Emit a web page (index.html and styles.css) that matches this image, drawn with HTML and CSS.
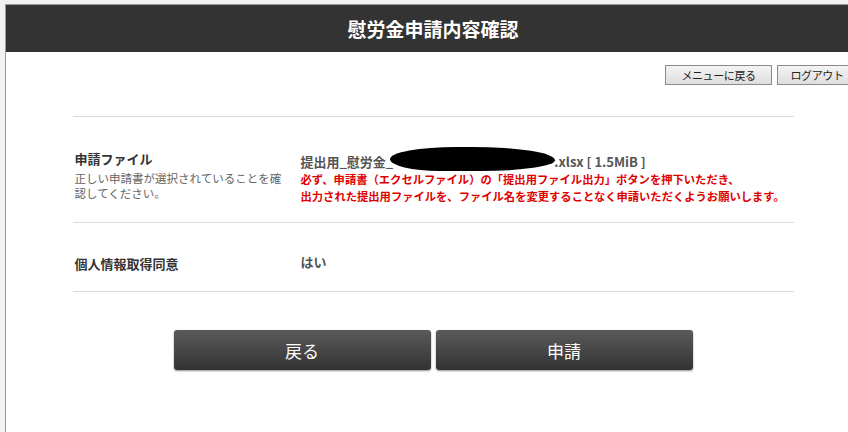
FILE: index.html
```html
<!DOCTYPE html>
<html lang="ja">
<head>
  <meta charset="UTF-8">
  <meta name="viewport" content="width=device-width, initial-scale=1.0">
  <title>慰労金申請内容確認</title>
  <link rel="stylesheet" href="styles.css">
</head>
<body>
  <div class="page">
    <div class="header">
      <h1>慰労金申請内容確認</h1>
    </div>

    <div class="topnav">
      <button class="nav-btn">メニューに戻る</button>
      <button class="nav-btn logout">ログアウト</button>
    </div>

    <table class="confirm">
      <tr class="row-file">
        <th>
          <div class="label">申請ファイル</div>
          <div class="desc">正しい申請書が選択されていることを確認してください。</div>
        </th>
        <td>
          <div class="filename">提出用_慰労金_<span class="redact"></span>.xlsx [ 1.5MiB ]</div>
          <div class="notice">必ず、申請書（エクセルファイル）の「提出用ファイル出力」ボタンを押下いただき、</div>
          <div class="notice">出力された提出用ファイルを、ファイル名を変更することなく申請いただくようお願いします。</div>
        </td>
      </tr>
      <tr class="row-agree">
        <th><div class="label">個人情報取得同意</div></th>
        <td><div class="filename">はい</div></td>
      </tr>
    </table>

    <div class="actions">
      <button class="big-btn">戻る</button>
      <button class="big-btn">申請</button>
    </div>
  </div>
</body>
</html>
```

FILE: styles.css
```css
html, body {
  margin: 0;
  height: 100%;
}
body {
  background: #f2f2f2;
  overflow: hidden;
  font-family: "Noto Sans CJK JP", "Noto Sans", sans-serif;
  color: #333;
}
.page {
  width: 854px;
  min-height: 428px;
  margin: 4px 0 0 5px;
  background: #fff;
  border-top: 1px solid #9a9a9a;
  border-left: 1px solid #9a9a9a;
}
.header {
  height: 47px;
  background: #333;
  display: flex;
  align-items: center;
  justify-content: center;
}
.header h1 {
  margin: 0;
  color: #fff;
  font-size: 19px;
  font-weight: bold;
}
.topnav {
  display: flex;
  gap: 5px;
  padding: 13px 0 0 659px;
}
.nav-btn {
  flex: none;
  width: 107px;
  height: 20px;
  padding: 0;
  font-family: "Noto Sans CJK JP", sans-serif;
  font-size: 11px;
  letter-spacing: -0.4px;
  line-height: 18px;
  color: #222;
  background: linear-gradient(#f4f4f4, #dedede);
  border: 1px solid #8a8a8a;
  border-radius: 0;
}
.nav-btn.logout {
  width: 80px;
}
.confirm {
  width: 721px;
  margin: 31px auto 0;
  border-collapse: collapse;
  border-top: 1px solid #dcdcdc;
}
.confirm tr {
  border-bottom: 1px solid #dcdcdc;
}
.confirm th {
  width: 226px;
  text-align: left;
  vertical-align: top;
  padding: 0 0 0 2px;
  font-weight: normal;
}
.confirm td {
  vertical-align: top;
  padding: 0;
}
.row-file th { padding-top: 32px; padding-bottom: 21px; }
.row-file td { padding-top: 30px; }
.row-agree th { padding-top: 31px; padding-bottom: 18px; }
.row-agree td { padding-top: 30px; }
.label {
  font-size: 13px;
  font-weight: bold;
  color: #333;
  line-height: 19px;
}
.desc {
  width: 215px;
  margin-top: 3px;
  font-size: 11.5px;
  line-height: 15px;
  color: #666;
}
.filename {
  font-size: 13px;
  font-weight: bold;
  color: #555;
  line-height: 18px;
  white-space: nowrap;
}
.redact {
  display: inline-block;
  width: 165px;
  height: 24px;
  margin: 0 -1px -4px -3px;
  background: #000;
  border-radius: 40% 50% 45% 30% / 50% 55% 45% 50%;
  vertical-align: baseline;
}
.notice {
  font-size: 11.3px;
  font-weight: bold;
  color: #e00000;
  line-height: 17px;
  white-space: nowrap;
}
.actions {
  display: flex;
  justify-content: center;
  gap: 5px;
  margin-top: 38px;
}
.big-btn {
  width: 257px;
  height: 40px;
  font-family: "Noto Sans CJK JP", sans-serif;
  font-size: 17px;
  color: #fff;
  background: linear-gradient(#5a5a5a, #333);
  border: none;
  border-radius: 3px;
  box-shadow: 0 1px 2px rgba(0, 0, 0, 0.45);
}
```
